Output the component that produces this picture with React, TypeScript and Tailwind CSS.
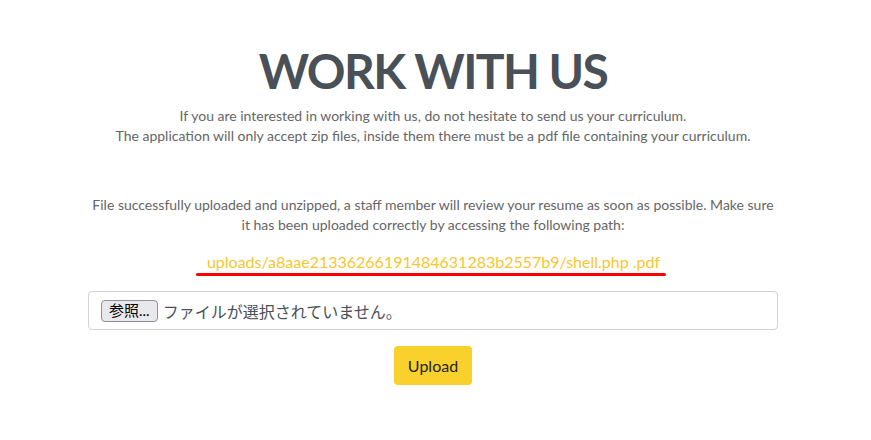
import React from 'react';

const App = () => {
  return (
    <div className="min-h-[440px] bg-white font-['Lato','Noto_Sans_CJK_JP',sans-serif] pr-[5px]">
      <section className="pt-[41px] flex flex-col items-center">
        <h1 className="text-[48px] leading-[60px] font-bold text-[#495057] tracking-[-1.6px]">WORK WITH US</h1>
        <p className="mt-[5px] text-[14px] leading-[20px] text-[#666] text-center">
          If you are interested in working with us, do not hesitate to send us your curriculum.
          <br />
          The application will only accept zip files, inside them there must be a pdf file containing your curriculum.
        </p>

        <div className="mt-[49px] w-[690px] flex flex-col items-center">
          <p className="text-[14px] leading-[20px] text-[#666] text-center whitespace-nowrap">
            File successfully uploaded and unzipped, a staff member will review your resume as soon as possible. Make sure
            <br />
            it has been uploaded correctly by accessing the following path:
          </p>
          <div className="mt-[15px] relative -ml-[4px]">
            <span className="block pl-[11px] pr-[6px] text-[16px] leading-[24px] text-[#f8c630]">
              uploads/a8aae21336266191484631283b2557b9/shell.php .pdf
            </span>
            <div className="absolute left-0 right-0 -bottom-[2px] h-[3px] bg-[#ff0000] rounded-full"></div>
          </div>

          <form className="mt-[17px] w-full flex flex-col items-center" onSubmit={(e) => e.preventDefault()}>
            <div className="w-full h-[39px] border border-[#ced4da] rounded-[4px] flex items-center pl-[12px]">
              <span className="h-[22px] px-[7px] flex items-center border border-[#8f8f9d] rounded-[4px] bg-[#e9e9ed] text-[15px] text-black">
                参照...
              </span>
              <span className="ml-[5px] text-[16px] text-[#495057] font-['Noto_Sans_CJK_JP',sans-serif]">ファイルが選択されていません。</span>
            </div>
            <button
              type="submit"
              className="mt-[16px] w-[78px] h-[39px] rounded-[4px] bg-[#fad02c] text-[16px] text-[#212529]"
            >
              Upload
            </button>
          </form>
        </div>
      </section>
    </div>
  );
};

export default App;
